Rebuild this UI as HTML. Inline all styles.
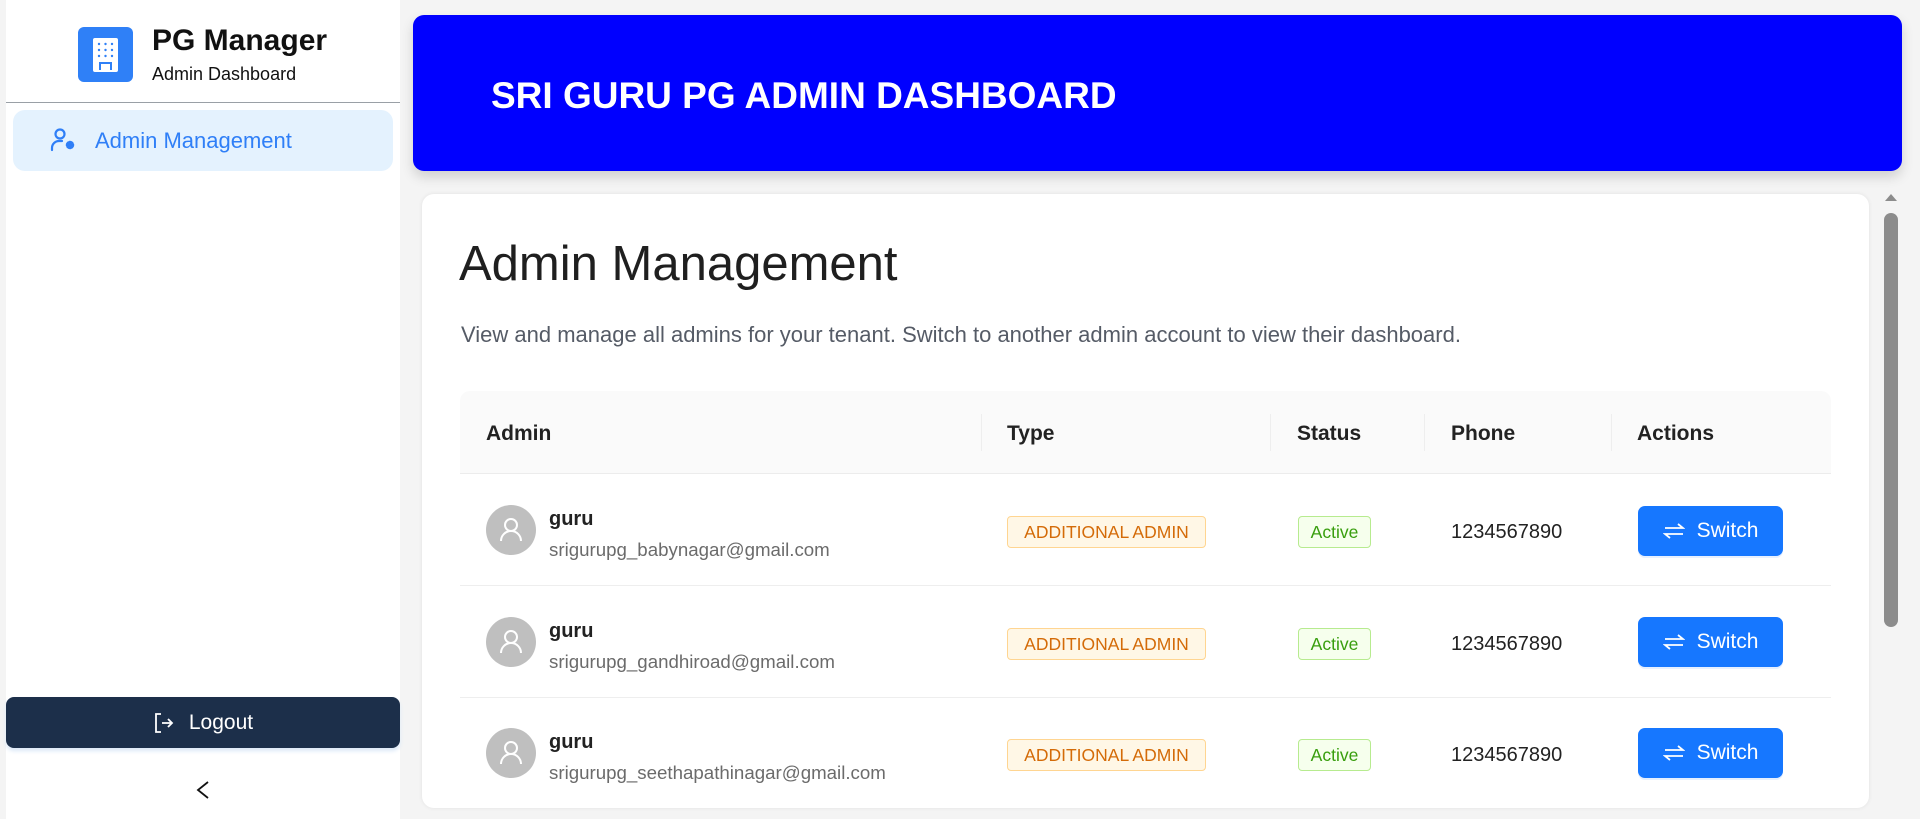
<!DOCTYPE html>
<html><head><meta charset="utf-8"><style>
*{box-sizing:border-box;margin:0;padding:0}
body{width:1920px;height:819px;overflow:hidden;background:#f4f4f4;font-family:"Liberation Sans",sans-serif;position:relative;color:#1f1f1f}
.abs{position:absolute}
.side{left:6px;top:0;width:394px;height:819px;background:#fff}
.logo{left:78px;top:27px;width:55px;height:55px;background:#2f80f7;border-radius:6px}
.nav{left:13px;top:110px;width:380px;height:61px;background:#e4f2fe;border-radius:12px}
.logout{left:6px;top:697px;width:394px;height:51px;background:#1c2f4a;border-radius:8px;color:#fff;font-size:21px;display:flex;align-items:center;justify-content:center;gap:14px;box-shadow:0 3px 4px #dbe8f7}
.hdr{left:413px;top:15px;width:1489px;height:156px;background:#0000ff;border-radius:11px;box-shadow:0 6px 12px rgba(0,0,0,.15)}
.card{left:422px;top:194px;width:1447px;height:614px;background:#fff;border-radius:12px;box-shadow:0 0 4px rgba(0,0,0,.08)}
.th{top:391px;left:460px;width:1371px;height:83px;background:#fafafa;border-radius:10px 10px 0 0;border-bottom:1px solid #ececec}
.hcell{position:absolute;top:422px;font-size:21px;font-weight:bold;color:#222}
.sep{position:absolute;top:414px;width:1px;height:37px;background:#eee}
.rowb{position:absolute;left:460px;width:1371px;height:1px;background:#eee}
.av{position:absolute;left:486px;width:50px;height:50px;border-radius:50%;background:#bfbfbf}
.name{position:absolute;left:549px;font-size:20px;font-weight:bold;color:#222}
.mail{position:absolute;left:549px;font-size:18.7px;color:#6b6b6b}
.tag{position:absolute;left:1007px;width:199px;height:32px;border:1px solid #ffd591;background:#fff7e6;color:#d46b08;border-radius:4px;font-size:17.5px;display:flex;align-items:center;justify-content:center}
.act{position:absolute;left:1298px;width:73px;height:32px;border:1px solid #b7eb8f;background:#f6ffed;color:#389e0d;border-radius:4px;font-size:17.5px;display:flex;align-items:center;justify-content:center}
.ph{position:absolute;left:1451px;font-size:20px;color:#222}
.btn{position:absolute;left:1638px;width:145px;height:50px;background:#1677ff;border-radius:7px;color:#fff;font-size:21px;display:flex;align-items:center;justify-content:center;gap:12px;box-shadow:0 2px 0 #e6f0ff}
</style></head><body>
<div class="abs side"></div>
<div class="abs logo"><svg width="55" height="55" viewBox="0 0 55 55"><rect x="15" y="11" width="25" height="34" rx="2" fill="#fff"/><g fill="#2f80f7"><circle cx="21" cy="17" r="1.2"/><circle cx="27.5" cy="17" r="1.2"/><circle cx="34" cy="17" r="1.2"/><circle cx="21" cy="23" r="1.2"/><circle cx="27.5" cy="23" r="1.2"/><circle cx="34" cy="23" r="1.2"/><circle cx="21" cy="29" r="1.2"/><circle cx="27.5" cy="29" r="1.2"/><circle cx="34" cy="29" r="1.2"/><rect x="21" y="35" width="13" height="8"/></g><rect x="23" y="37" width="9" height="6" fill="#fff"/></svg></div>
<div class="abs" style="left:152px;top:24px;font-size:30px;color:#111;font-weight:bold">PG Manager</div>
<div class="abs" style="left:152px;top:64px;font-size:18px;color:#111">Admin Dashboard</div>
<div class="abs" style="left:6px;top:102px;width:394px;height:1px;background:#9aa0a6"></div>
<div class="abs nav"></div>
<svg class="abs" style="left:50px;top:128px" width="28" height="26" viewBox="0 0 28 26" fill="none" stroke="#2f7ff7" stroke-width="2.2" stroke-linecap="round"><circle cx="10" cy="6" r="4.5"/><path d="M2 22v-2a7 7 0 0 1 7-7h3"/><circle cx="20" cy="17" r="2.5" stroke-width="3.5" stroke-dasharray="2 1.8"/><circle cx="20" cy="17" r="1.4" fill="#2f7ff7" stroke="none"/></svg>
<div class="abs" style="left:95px;top:128px;font-size:22px;color:#2f7ff7">Admin Management</div>
<div class="abs logout"><svg width="22" height="22" viewBox="0 0 22 22" fill="none" stroke="#fff" stroke-width="1.8"><path d="M8 2H3v18h5"/><path d="M9 11h10M15 7l4 4-4 4"/></svg><span>Logout</span></div>
<svg class="abs" style="left:195px;top:780px" width="16" height="20" viewBox="0 0 16 20" fill="none" stroke="#111" stroke-width="1.8"><path d="M13 2L3 10l10 8"/></svg>
<div class="abs hdr"></div>
<div class="abs" style="left:491px;top:75px;font-size:37px;font-weight:bold;color:#fff">SRI GURU PG ADMIN DASHBOARD</div>
<div class="abs card"></div>
<div class="abs" style="left:459px;top:236px;font-size:49px;color:#1f1f1f">Admin Management</div>
<div class="abs" style="left:461px;top:322px;font-size:22px;color:#555b66">View and manage all admins for your tenant. Switch to another admin account to view their dashboard.</div>
<div class="abs th"></div>
<div class="hcell" style="left:486px">Admin</div>
<div class="hcell" style="left:1007px">Type</div>
<div class="hcell" style="left:1297px">Status</div>
<div class="hcell" style="left:1451px">Phone</div>
<div class="hcell" style="left:1637px">Actions</div>
<div class="sep" style="left:981px"></div><div class="sep" style="left:1270px"></div><div class="sep" style="left:1424px"></div><div class="sep" style="left:1611px"></div>
<div class="rowb" style="top:585px"></div><div class="rowb" style="top:697px"></div>

<div class="av" style="top:505px"><svg width="50" height="50" viewBox="0 0 50 50" fill="none" stroke="#fff" stroke-width="2"><circle cx="25" cy="20" r="6"/><path d="M15 36a10 10 0 0 1 20 0"/></svg></div>
<div class="name" style="top:508px">guru</div><div class="mail" style="top:539px">srigurupg_babynagar@gmail.com</div>
<div class="tag" style="top:516px">ADDITIONAL ADMIN</div><div class="act" style="top:516px">Active</div>
<div class="ph" style="top:521px">1234567890</div>
<div class="btn" style="top:506px"><svg width="22" height="18" viewBox="0 0 22 18" fill="none" stroke="#fff" stroke-width="1.8"><path d="M2 6h18L15 2M20 12H2l5 4"/></svg><span>Switch</span></div>

<div class="av" style="top:617px"><svg width="50" height="50" viewBox="0 0 50 50" fill="none" stroke="#fff" stroke-width="2"><circle cx="25" cy="20" r="6"/><path d="M15 36a10 10 0 0 1 20 0"/></svg></div>
<div class="name" style="top:620px">guru</div><div class="mail" style="top:651px">srigurupg_gandhiroad@gmail.com</div>
<div class="tag" style="top:628px">ADDITIONAL ADMIN</div><div class="act" style="top:628px">Active</div>
<div class="ph" style="top:633px">1234567890</div>
<div class="btn" style="top:617px"><svg width="22" height="18" viewBox="0 0 22 18" fill="none" stroke="#fff" stroke-width="1.8"><path d="M2 6h18L15 2M20 12H2l5 4"/></svg><span>Switch</span></div>

<div class="av" style="top:728px"><svg width="50" height="50" viewBox="0 0 50 50" fill="none" stroke="#fff" stroke-width="2"><circle cx="25" cy="20" r="6"/><path d="M15 36a10 10 0 0 1 20 0"/></svg></div>
<div class="name" style="top:731px">guru</div><div class="mail" style="top:762px">srigurupg_seethapathinagar@gmail.com</div>
<div class="tag" style="top:739px">ADDITIONAL ADMIN</div><div class="act" style="top:739px">Active</div>
<div class="ph" style="top:744px">1234567890</div>
<div class="btn" style="top:728px"><svg width="22" height="18" viewBox="0 0 22 18" fill="none" stroke="#fff" stroke-width="1.8"><path d="M2 6h18L15 2M20 12H2l5 4"/></svg><span>Switch</span></div>

<svg class="abs" style="left:1883px;top:191px" width="16" height="12" viewBox="0 0 16 12"><path d="M2 10L8 3l6 7z" fill="#8c8c8c"/></svg>
<div class="abs" style="left:1884px;top:213px;width:14px;height:414px;background:#8c8c8c;border-radius:7px"></div>
</body></html>
